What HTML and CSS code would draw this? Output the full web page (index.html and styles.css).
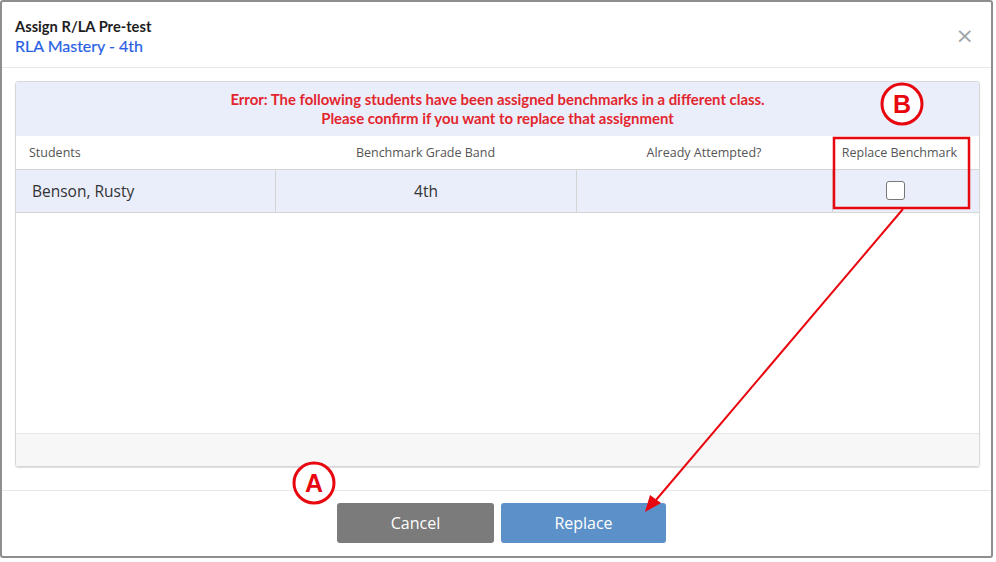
FILE: index.html
```html
<!DOCTYPE html>
<html lang="en">
<head>
  <meta charset="UTF-8" />
  <title>Assign R/LA Pre-test</title>
  <link rel="stylesheet" href="styles.css">
</head>
<body>
  <div class="modal">
    <div class="modal-header">
      <div>
        <div class="title">Assign R/LA Pre-test</div>
        <div class="subtitle">RLA Mastery - 4th</div>
      </div>
      <span class="close">&times;</span>
    </div>

    <div class="modal-body">
      <div class="panel">
        <div class="error">
          Error: The following students have been assigned benchmarks in a different class.<br>
          Please confirm if you want to replace that assignment
        </div>
        <div class="row head">
          <div class="cell left">Students</div>
          <div class="cell">Benchmark Grade Band</div>
          <div class="cell">Already Attempted?</div>
          <div class="cell last">Replace Benchmark</div>
        </div>
        <div class="row data">
          <div class="cell left">Benson, Rusty</div>
          <div class="cell">4th</div>
          <div class="cell"></div>
          <div class="cell"><span class="checkbox"></span></div>
        </div>
        <div class="empty"></div>
        <div class="panel-foot"></div>
      </div>
    </div>

    <div class="modal-footer">
      <button class="btn cancel">Cancel</button>
      <button class="btn replace">Replace</button>
    </div>
  </div>

  <svg class="marks" width="996" height="562" viewBox="0 0 996 562">
    <rect x="834" y="138" width="135" height="70" fill="none" stroke="#e8060f" stroke-width="2.5"/>
    <circle cx="902" cy="104" r="20" fill="#fff" stroke="#e8060f" stroke-width="3"/>
    <text x="902" y="113" text-anchor="middle" class="mark-letter">B</text>
    <circle cx="314" cy="483" r="20" fill="#fff" stroke="#e8060f" stroke-width="3"/>
    <text x="314" y="492" text-anchor="middle" class="mark-letter">A</text>
    <line x1="903" y1="209" x2="656" y2="500" stroke="#e8060f" stroke-width="2"/>
    <polygon points="645,512 661,503 650,495" fill="#e8060f"/>
  </svg>
</body>
</html>
```

FILE: styles.css
```css
* {
  margin: 0;
  padding: 0;
  box-sizing: border-box;
}

body {
  width: 996px;
  height: 562px;
  background: #fff;
  font-family: 'Open Sans', sans-serif;
  position: relative;
  overflow: hidden;
}

.modal {
  width: 993px;
  height: 558px;
  border: 2px solid #8e8e8e;
  border-radius: 3px;
  background: #fff;
  display: flex;
  flex-direction: column;
}

.modal-header {
  height: 66px;
  padding: 15px 0 0 13px;
  border-bottom: 1px solid #e8e8e8;
  display: flex;
  justify-content: space-between;
  font-family: 'Lato', sans-serif;
}

.title {
  font-size: 14.7px;
  font-weight: bold;
  color: #1e1e1e;
  line-height: 19px;
}

.subtitle {
  font-size: 16px;
  color: #2a5fe3;
  line-height: 20px;
  -webkit-text-stroke: 0.2px #2a5fe3;
}

.close {
  font-family: 'DejaVu Sans', sans-serif;
  font-size: 22px;
  color: #a0a5ab;
  margin: 5px 17px 0 0;
  line-height: 28px;
}

.modal-body {
  padding: 13px 11px 0 13px;
  height: 423px;
  border-bottom: 1px solid #e8e8e8;
}

.panel {
  height: 386px;
  border: 1px solid #d8d8d8;
  border-radius: 3px;
  box-shadow: 0 1px 1px #ddd;
  display: flex;
  flex-direction: column;
  overflow: hidden;
}

.error {
  height: 54px;
  background: #eaeefb;
  color: #e3262e;
  font-family: 'Lato', sans-serif;
  font-weight: bold;
  font-size: 14.9px;
  line-height: 19px;
  text-align: center;
  padding-top: 8px;
}

.row {
  display: grid;
  grid-template-columns: 259px 301px 256px 1fr;
}

.head {
  height: 33px;
  font-size: 12.5px;
  color: #555;
}

.head .cell {
  display: flex;
  align-items: center;
  justify-content: center;
}

.head .cell.last {
  padding-right: 12px;
}

.data {
  height: 44px;
  background: #eaeefb;
  border-top: 1px solid #d6d6d6;
  border-bottom: 1px solid #d6d6d6;
  font-size: 15.5px;
  color: #333;
}

.data .cell {
  display: flex;
  align-items: center;
  justify-content: center;
  border-left: 1px solid #d4d4d4;
  padding-bottom: 1px;
}

.data .cell:first-child {
  border-left: none;
}

.head .cell.left {
  justify-content: flex-start;
  padding-left: 13px;
}

.data .cell.left {
  justify-content: flex-start;
  padding-left: 16px;
}

.checkbox {
  width: 19px;
  height: 19px;
  border: 1.5px solid #777;
  border-radius: 3px;
  background: #fff;
  margin-left: -22px;
}

.empty {
  flex: 1;
  background: #fff;
}

.panel-foot {
  height: 33px;
  background: #f7f7f7;
  border-top: 1px solid #e6e6e6;
}

.modal-footer {
  flex: 1;
  display: flex;
  justify-content: center;
  gap: 7px;
  padding: 12px 0 0 10px;
}

.btn {
  height: 40px;
  border: none;
  border-radius: 3px;
  color: #fff;
  font-family: 'Open Sans', sans-serif;
  font-size: 16px;
}

.cancel {
  width: 157px;
  background: #7b7b7b;
}

.replace {
  width: 165px;
  background: #5c90c8;
}

.marks {
  position: absolute;
  top: 0;
  left: 0;
  pointer-events: none;
}

.mark-letter {
  font-family: 'Liberation Sans', Arial, sans-serif;
  font-weight: bold;
  font-size: 25px;
  fill: #e8060f;
}
```
